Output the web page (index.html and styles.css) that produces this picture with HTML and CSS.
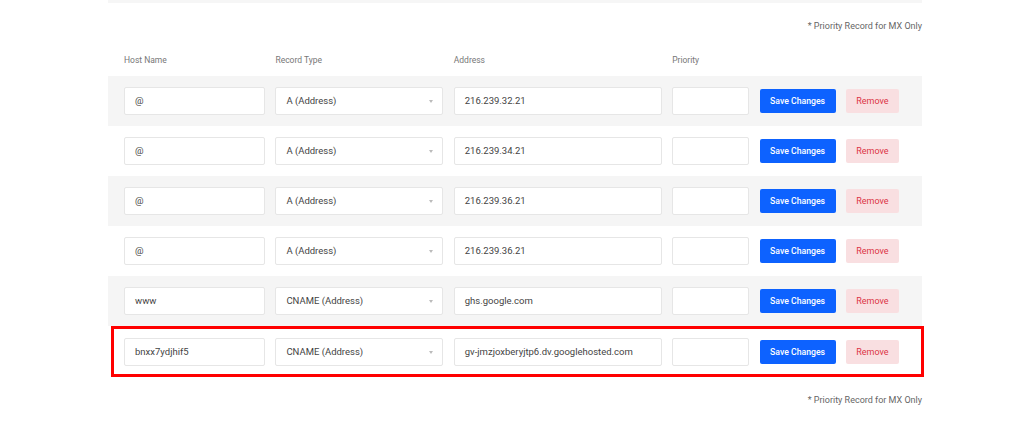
FILE: index.html
```html
<!DOCTYPE html>
<html lang="en">
<head>
    <meta charset="UTF-8">
    <title>DNS Records</title>
    <link rel="stylesheet" href="styles.css">
</head>
<body>
<div class="records">
    <div class="top-bar"></div>
    <p class="note">* Priority Record for MX Only</p>

    <div class="grid head">
        <span>Host Name</span>
        <span>Record Type</span>
        <span>Address</span>
        <span>Priority</span>
    </div>

    <div class="grid row odd">
        <div class="field">@</div>
        <div class="field select">A (Address)</div>
        <div class="field">216.239.32.21</div>
        <div class="field"></div>
        <button class="btn-save">Save Changes</button>
        <button class="btn-remove">Remove</button>
    </div>
    <div class="grid row">
        <div class="field">@</div>
        <div class="field select">A (Address)</div>
        <div class="field">216.239.34.21</div>
        <div class="field"></div>
        <button class="btn-save">Save Changes</button>
        <button class="btn-remove">Remove</button>
    </div>
    <div class="grid row odd">
        <div class="field">@</div>
        <div class="field select">A (Address)</div>
        <div class="field">216.239.36.21</div>
        <div class="field"></div>
        <button class="btn-save">Save Changes</button>
        <button class="btn-remove">Remove</button>
    </div>
    <div class="grid row">
        <div class="field">@</div>
        <div class="field select">A (Address)</div>
        <div class="field">216.239.36.21</div>
        <div class="field"></div>
        <button class="btn-save">Save Changes</button>
        <button class="btn-remove">Remove</button>
    </div>
    <div class="grid row odd">
        <div class="field">www</div>
        <div class="field select">CNAME (Address)</div>
        <div class="field">ghs.google.com</div>
        <div class="field"></div>
        <button class="btn-save">Save Changes</button>
        <button class="btn-remove">Remove</button>
    </div>
    <div class="grid row marked">
        <div class="field">bnxx7ydjhif5</div>
        <div class="field select">CNAME (Address)</div>
        <div class="field">gv-jmzjoxberyjtp6.dv.googlehosted.com</div>
        <div class="field"></div>
        <button class="btn-save">Save Changes</button>
        <button class="btn-remove">Remove</button>
    </div>

    <p class="note note-bottom">* Priority Record for MX Only</p>
</div>
</body>
</html>
```

FILE: styles.css
```css
* {
    margin: 0;
    padding: 0;
    box-sizing: border-box;
}

body {
    background: #ffffff;
    font-family: Roboto, "Liberation Sans", Arial, sans-serif;
    color: #444;
}

.records {
    width: 814px;
    margin-left: 108px;
}

.top-bar {
    height: 3px;
    background-color: #f6f6f6;
}

.note {
    margin-top: 16px;
    font-size: 9px;
    line-height: 14px;
    color: #666;
    text-align: right;
}

.note-bottom {
    margin-top: 16px;
}

.grid {
    display: grid;
    grid-template-columns: 141px 168px 208px 77px 76px 53px;
    column-gap: 10.4px;
    align-items: center;
    padding: 0 16px;
}

.head {
    padding-top: 20px;
    padding-bottom: 9px;
    font-size: 8.5px;
    line-height: 14px;
    color: #777;
}

.row {
    height: 50px;
}

.odd {
    background-color: #f5f5f5;
}

.marked {
    height: 51px;
    margin-left: 3px;
    margin-right: -2px;
    padding-left: 10px;
    border: 3px solid #ff0000;
}

.field {
    height: 28px;
    line-height: 26px;
    padding: 0 10px;
    background: #ffffff;
    border: 1px solid #e6e6e6;
    border-radius: 2px;
    font-size: 9.5px;
    color: #444;
    white-space: nowrap;
    overflow: hidden;
}

.select {
    position: relative;
}

.select::after {
    content: "";
    position: absolute;
    right: 9px;
    top: 12px;
    border-left: 2.5px solid transparent;
    border-right: 2.5px solid transparent;
    border-top: 3px solid #bbbbbb;
}

.btn-save,
.btn-remove {
    height: 24px;
    border: none;
    border-radius: 2px;
    font-family: Roboto, "Liberation Sans", Arial, sans-serif;
    font-size: 8.7px;
    font-weight: 500;
    cursor: pointer;
}

.btn-save {
    background-color: #0d62ff;
    color: #ffffff;
}

.btn-remove {
    background-color: #f9dfe1;
    color: #dc3545;
    font-size: 9px;
    font-weight: 400;
}
```
